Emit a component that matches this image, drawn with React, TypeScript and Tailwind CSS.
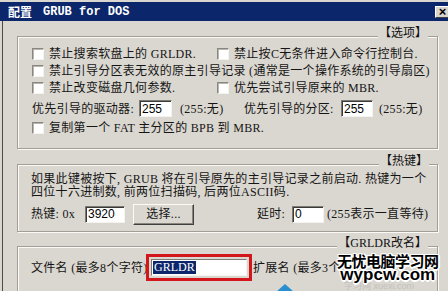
import React from "react";

const cjk = "font-['Liberation_Serif','Noto_Sans_CJK_SC',serif]";

function Check() {
  return (
    <span className="inline-block w-[12px] h-[12px] shrink-0 bg-white border border-t-[#8a8780] border-l-[#8a8780] border-r-[#f4f3f0] border-b-[#f4f3f0] shadow-[inset_1px_1px_0_#b8b5ae]" />
  );
}

function Field({ w, h = 17, children }: { w: number; h?: number; children?: React.ReactNode }) {
  return (
    <div
      className="shrink-0 bg-white border border-t-[#7d7a74] border-l-[#7d7a74] border-r-[#f4f3f0] border-b-[#f4f3f0] shadow-[inset_1px_1px_0_#3a3a3a] pl-[2px] flex items-center text-[12px] leading-[14px] tracking-normal text-black font-['Liberation_Sans',sans-serif]"
      style={{ width: w, height: h }}
    >
      {children}
    </div>
  );
}

function Group({ label, right, className, children }: { label: string; right: number; className?: string; children: React.ReactNode }) {
  return (
    <div className={"relative border border-[#a19e97] shadow-[inset_1px_1px_0_#fbfaf7,1px_1px_0_#fbfaf7] " + (className ?? "")}>
      <span
        className="absolute top-[-12px] bg-[#dad7d0] px-[1px] text-[12px] leading-[16px] tracking-normal text-[#111]"
        style={{ right }}
      >
        {label}
      </span>
      {children}
    </div>
  );
}

export default function App() {
  return (
    <div className={"relative w-[448px] h-[291px] overflow-hidden bg-[#dad7d0] pt-[2px] text-[12px] leading-[16px] text-[#151515] " + cjk}>
      {/* title bar */}
      <div className="h-[19px] bg-[#0b266b] flex items-center pl-[8px] text-white">
        <span className="font-bold text-[12px] font-['Noto_Sans_CJK_SC',sans-serif]">配置</span>
        <span className="ml-[11px] font-bold text-[12px] font-['Liberation_Mono',monospace]">GRUB for DOS</span>
        <div className="ml-auto mr-[-2px] w-[15px] h-[12px] bg-[#d8d5ce] border border-t-white border-l-white border-r-[#404040] border-b-[#404040] flex items-center justify-center text-black font-bold text-[13px] leading-[12px] font-['Liberation_Sans',sans-serif]">
          ×
        </div>
      </div>

      {/* body */}
      <div className="ml-[2px] h-full border-l border-[#4a4a4a] pl-[14px] pr-[10px] pt-[15px] flex flex-col tracking-[0.3px]">
        {/* 选项 */}
        <Group label="【选项】" right={9} className="h-[113px] pt-[8px] pl-[14px]">
          <div className="h-[17px] flex items-center">
            <div className="w-[185px] flex items-center gap-[5px]">
              <Check />
              <span className="whitespace-nowrap">禁止搜索软盘上的 GRLDR.</span>
            </div>
            <div className="flex items-center gap-[5px]">
              <Check />
              <span className="whitespace-nowrap">禁止按C无条件进入命令行控制台.</span>
            </div>
          </div>
          <div className="h-[17px] flex items-center gap-[5px]">
            <Check />
            <span className="whitespace-nowrap">禁止引导分区表无效的原主引导记录 (通常是一个操作系统的引导扇区)</span>
          </div>
          <div className="h-[17px] flex items-center">
            <div className="w-[185px] flex items-center gap-[5px]">
              <Check />
              <span className="whitespace-nowrap">禁止改变磁盘几何参数.</span>
            </div>
            <div className="flex items-center gap-[5px]">
              <Check />
              <span className="whitespace-nowrap">优先尝试引导原来的 MBR.</span>
            </div>
          </div>
          <div className="mt-[2px] h-[21px] flex items-center">
            <span className="w-[107px] shrink-0 whitespace-nowrap">优先引导的驱动器:</span>
            <Field w={33}>255</Field>
            <span className="ml-[8px] w-[64px] shrink-0 whitespace-nowrap">(255:无)</span>
            <span className="w-[97px] shrink-0 whitespace-nowrap">优先引导的分区:</span>
            <Field w={32}>255</Field>
            <span className="ml-[6px] whitespace-nowrap">(255:无)</span>
          </div>
          <div className="h-[17px] flex items-center gap-[5px]">
            <Check />
            <span className="whitespace-nowrap">复制第一个 FAT 主分区的 BPB 到 MBR.</span>
          </div>
        </Group>

        {/* 热键 */}
        <Group label="【热键】" right={8} className="mt-[15px] h-[68px] pt-[8px] pl-[13px]">
          <div className="leading-[13px] whitespace-nowrap">如果此键被按下, GRUB 将在引导原先的主引导记录之前启动. 热键为一个</div>
          <div className="leading-[13px] whitespace-nowrap">四位十六进制数, 前两位扫描码, 后两位ASCII码.</div>
          <div className="mt-[4px] h-[22px] flex items-center">
            <span className="w-[54px] shrink-0 whitespace-nowrap">热键: 0x</span>
            <Field w={40}>3920</Field>
            <div className="ml-[8px] w-[61px] h-[21px] shrink-0 border border-t-[#fbfaf7] border-l-[#fbfaf7] border-r-[#404040] border-b-[#404040] shadow-[inset_-1px_-1px_0_#8a8780] flex items-center justify-center whitespace-nowrap">
              选择...
            </div>
            <span className="ml-[63px] w-[35px] shrink-0 whitespace-nowrap">延时:</span>
            <Field w={32}>0</Field>
            <span className="ml-[3px] whitespace-nowrap">(255表示一直等待)</span>
          </div>
        </Group>

        {/* GRLDR改名 */}
        <Group label="【GRLDR改名】" right={9} className="mt-[14px] h-[60px] pt-[7px] pl-[13px]">
          <div className="h-[27px] flex items-center">
            <span className="w-[115px] shrink-0 whitespace-nowrap">文件名 (最多8个字符)</span>
            <div className="w-[106px] h-[27px] shrink-0 border-[3px] border-[#d3151c] p-[2px]">
              <div className="h-full bg-white border border-t-[#7d7a74] border-l-[#7d7a74] border-r-[#f4f3f0] border-b-[#f4f3f0] flex items-center pl-[1px]">
                <span className="bg-[#0b266b] text-white leading-[13px] px-[1px] tracking-normal">GRLDR</span>
              </div>
            </div>
            <span className="ml-[1px] whitespace-nowrap">扩展名 (最多3个</span>
          </div>
        </Group>
      </div>

      {/* watermark overlay */}
      <span className="absolute left-[344px] top-[282px] text-[9px] leading-[9px] text-[#c2c0bb] font-['Liberation_Sans','Noto_Sans_CJK_SC',sans-serif]">
        学习网 xuexi.com
      </span>
      <div className="absolute left-[337px] top-[251px] flex flex-col items-center">
        <span className="text-[15px] leading-[19px] font-bold text-black tracking-[-0.5px] font-['Noto_Sans_CJK_SC',sans-serif] [text-shadow:1px_1px_0_#fff,-1px_-1px_0_#fff,1px_-1px_0_#fff,-1px_1px_0_#fff,0_2px_0_#fff,2px_0_0_#fff]">
          无忧电脑学习网
        </span>
        <span className="mt-[-3px] text-[17px] leading-[15px] font-bold text-black font-['Liberation_Sans',sans-serif] [text-shadow:1px_1px_0_#fff,-1px_-1px_0_#fff,1px_-1px_0_#fff,-1px_1px_0_#fff,0_2px_0_#fff,2px_0_0_#fff]">
          wypcw.com
        </span>
      </div>
      <div className="absolute left-[276px] top-[284px] w-0 h-0 border-l-[9px] border-r-[9px] border-b-[8px] border-l-transparent border-r-transparent border-b-[#2a8fd0]" />
    </div>
  );
}
